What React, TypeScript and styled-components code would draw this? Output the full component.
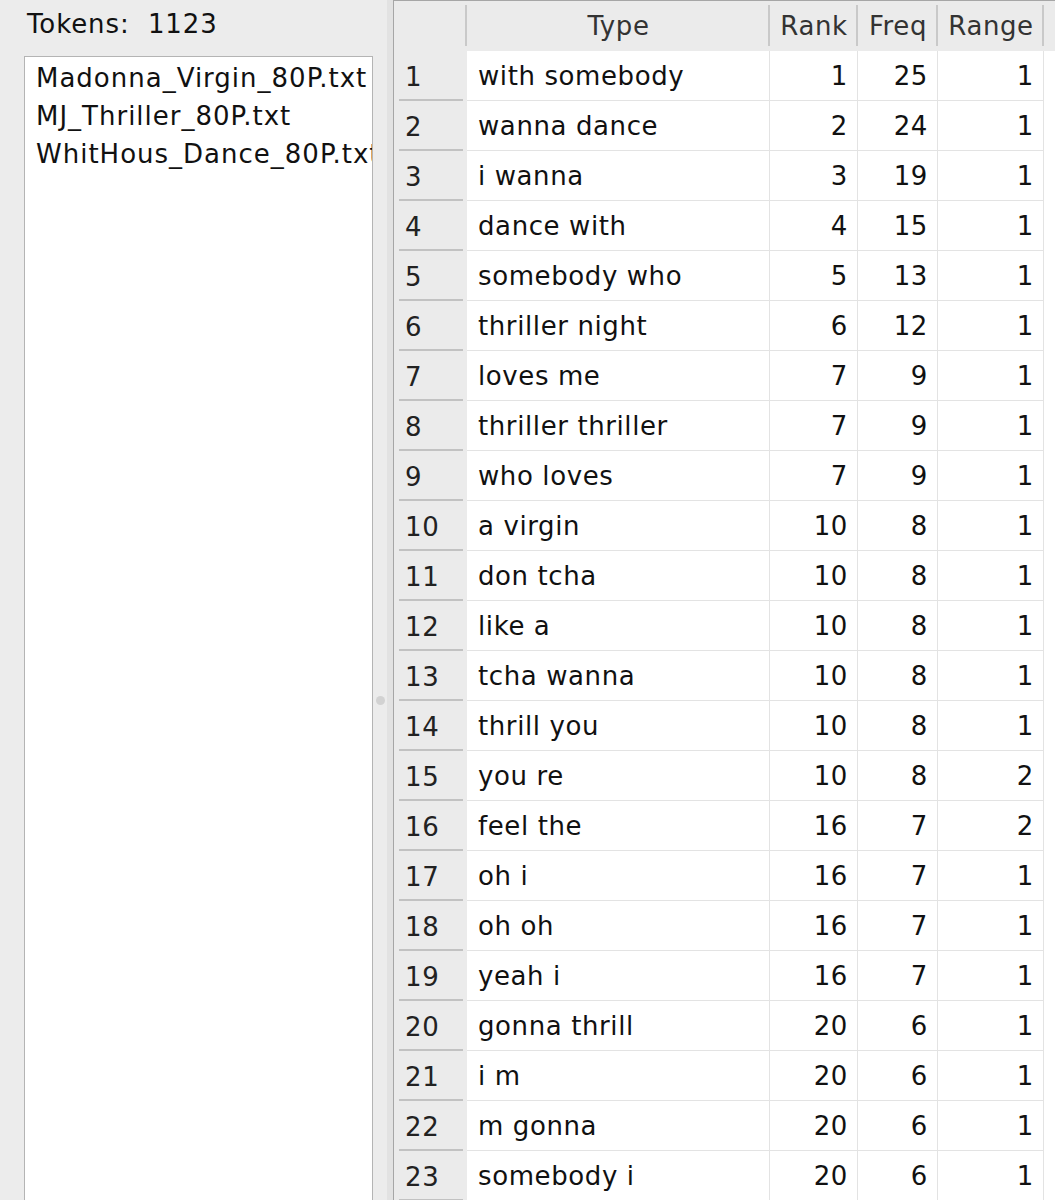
import React from 'react';
import styled, { createGlobalStyle } from 'styled-components';

const GlobalStyle = createGlobalStyle`
body {
  margin: 0;
  background: #ececec;
  font-family: "DejaVu Sans", "Noto Sans", sans-serif;
}
`

interface NgramRow {
  type: string;
  rank: number;
  freq: number;
  range: number;
}

const files = ['Madonna_Virgin_80P.txt', 'MJ_Thriller_80P.txt', 'WhitHous_Dance_80P.txt'];

const rows: NgramRow[] = [
  { type: 'with somebody', rank: 1, freq: 25, range: 1 },
  { type: 'wanna dance', rank: 2, freq: 24, range: 1 },
  { type: 'i wanna', rank: 3, freq: 19, range: 1 },
  { type: 'dance with', rank: 4, freq: 15, range: 1 },
  { type: 'somebody who', rank: 5, freq: 13, range: 1 },
  { type: 'thriller night', rank: 6, freq: 12, range: 1 },
  { type: 'loves me', rank: 7, freq: 9, range: 1 },
  { type: 'thriller thriller', rank: 7, freq: 9, range: 1 },
  { type: 'who loves', rank: 7, freq: 9, range: 1 },
  { type: 'a virgin', rank: 10, freq: 8, range: 1 },
  { type: 'don tcha', rank: 10, freq: 8, range: 1 },
  { type: 'like a', rank: 10, freq: 8, range: 1 },
  { type: 'tcha wanna', rank: 10, freq: 8, range: 1 },
  { type: 'thrill you', rank: 10, freq: 8, range: 1 },
  { type: 'you re', rank: 10, freq: 8, range: 2 },
  { type: 'feel the', rank: 16, freq: 7, range: 2 },
  { type: 'oh i', rank: 16, freq: 7, range: 1 },
  { type: 'oh oh', rank: 16, freq: 7, range: 1 },
  { type: 'yeah i', rank: 16, freq: 7, range: 1 },
  { type: 'gonna thrill', rank: 20, freq: 6, range: 1 },
  { type: 'i m', rank: 20, freq: 6, range: 1 },
  { type: 'm gonna', rank: 20, freq: 6, range: 1 },
  { type: 'somebody i', rank: 20, freq: 6, range: 1 },
];

const App = () => {
  return (
    <Window>
      <GlobalStyle />
      <LeftPane>
        <TokensLabel>Tokens:&nbsp; 1123</TokensLabel>
        <FileList>
          {files.map((f) => (
            <FileItem key={f}>{f}</FileItem>
          ))}
        </FileList>
      </LeftPane>
      <Splitter>
        <SplitterKnob />
      </Splitter>
      <TablePane>
        <HeaderRow>
          <HeaderCell />
          <HeaderCell>Type</HeaderCell>
          <HeaderCell>Rank</HeaderCell>
          <HeaderCell>Freq</HeaderCell>
          <HeaderCell>Range</HeaderCell>
          <HeaderFill />
        </HeaderRow>
        {rows.map((r, i) => (
          <BodyRow key={i}>
            <RowNumber>{i + 1}</RowNumber>
            <Cell>{r.type}</Cell>
            <Cell $right>{r.rank}</Cell>
            <Cell $right>{r.freq}</Cell>
            <Cell $right>{r.range}</Cell>
            <FillCell />
          </BodyRow>
        ))}
      </TablePane>
    </Window>
  )
}

const COLUMNS = '73px 303px 88px 80px 106px 1fr';

const Window = styled.div`
display: flex;
height: 1200px;
overflow: hidden;
background: #ececec;
color: #111;
font-size: 26px;
letter-spacing: 0.6px;
`

const LeftPane = styled.div`
width: 373px;
flex-shrink: 0;
display: flex;
flex-direction: column;
padding-left: 24px;
box-sizing: border-box;
`

const TokensLabel = styled.div`
height: 56px;
line-height: 48px;
padding-left: 3px;
color: #111;
white-space: nowrap;
letter-spacing: 0.9px;
`

const FileList = styled.div`
flex: 1;
background: #fff;
border: 1px solid #b4b4b4;
border-bottom: none;
padding: 2px 0 0 11px;
overflow: hidden;
`

const FileItem = styled.div`
line-height: 38px;
white-space: nowrap;
letter-spacing: 1px;
`

const Splitter = styled.div`
width: 20px;
flex-shrink: 0;
display: flex;
align-items: flex-start;
padding-top: 696px;
box-sizing: border-box;
border-right: 6px solid #e2e2e2;
`

const SplitterKnob = styled.span`
width: 9px;
height: 9px;
border-radius: 50%;
background: #d2d2d2;
margin-left: 3px;
`

const TablePane = styled.div`
flex: 1;
background: #fff;
border-top: 1px solid #a6a6a6;
border-left: 1px solid #a6a6a6;
overflow: hidden;
`

const HeaderRow = styled.div`
display: grid;
grid-template-columns: ${COLUMNS};
height: 50px;
background: #ebebeb;
`

const HeaderCell = styled.div`
display: flex;
align-items: center;
justify-content: center;
color: #333;
background: linear-gradient(#c9c9c9, #c9c9c9) no-repeat right 0 top 4px / 2px 41px;
`

const HeaderFill = styled.div`
background: #ebebeb;
`

const BodyRow = styled.div`
display: grid;
grid-template-columns: ${COLUMNS};
height: 50px;
`

const RowNumber = styled.div`
display: flex;
align-items: center;
padding-left: 11px;
padding-top: 1px;
color: #222;
background: linear-gradient(#c2c2c2, #c2c2c2) no-repeat center bottom / 64px 2px, #ebebeb;
`

const Cell = styled.div<{ $right?: boolean }>`
display: flex;
align-items: center;
justify-content: ${(p) => (p.$right ? 'flex-end' : 'flex-start')};
padding: ${(p) => (p.$right ? '1px 9px 0 0' : '1px 0 0 11px')};
border-right: 1px solid #e3e3e3;
border-bottom: 1px solid #e3e3e3;
white-space: nowrap;
color: #111;
`

const FillCell = styled.div`
background: #fff;
`

export default App;
